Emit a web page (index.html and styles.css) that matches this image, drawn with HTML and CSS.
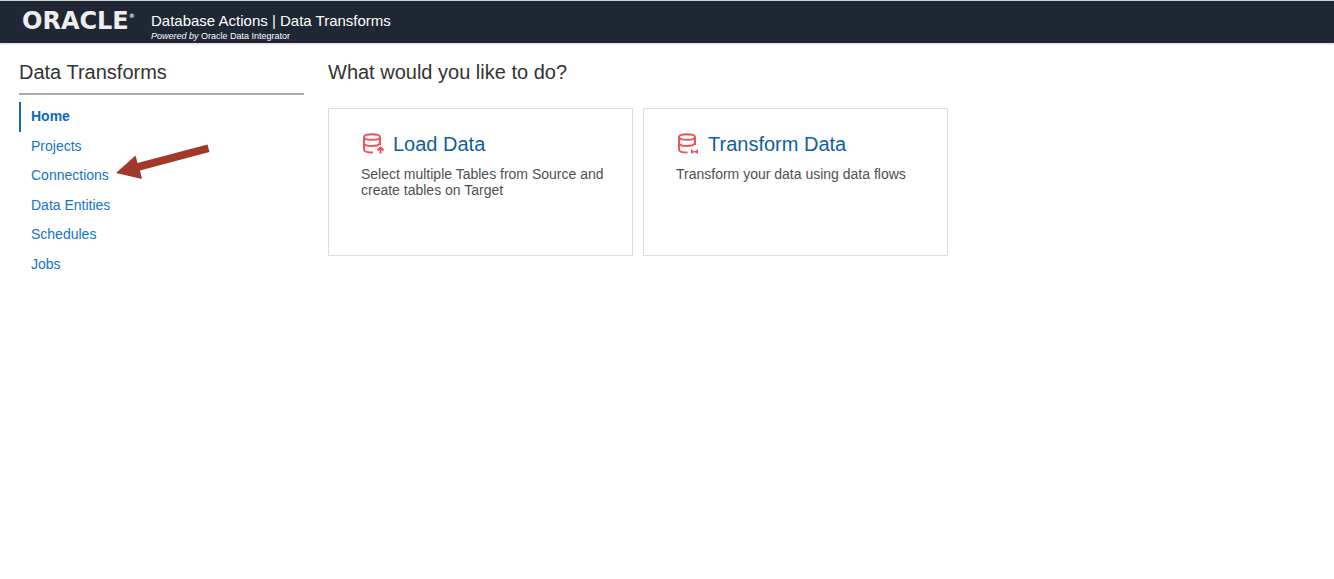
FILE: index.html
```html
<!DOCTYPE html>
<html lang="en">
<head>
<meta charset="utf-8">
<meta name="viewport" content="width=device-width, initial-scale=1">
<title>Data Transforms</title>
<link rel="stylesheet" href="styles.css">
</head>
<body>
<header class="topbar">
  <div class="logo">ORACLE<span class="logo-mark">®</span></div>
  <div class="product">
    <div class="product-name">Database Actions | Data Transforms</div>
    <div class="product-note"><em>Powered by</em> Oracle Data Integrator</div>
  </div>
</header>
<div class="layout">
  <aside class="sidebar">
    <h1 class="heading sidebar-title">Data Transforms</h1>
    <nav class="nav" aria-label="Data Transforms">
      <a class="nav-link active" href="#home" aria-current="page">Home</a>
      <a class="nav-link" href="#projects">Projects</a>
      <a class="nav-link" href="#connections">Connections
        <svg class="pointer" width="96" height="40" viewBox="0 0 96 40" aria-hidden="true"><path d="M1 31 20.500 13.500 22.500 21 92.500 2.500 94.500 10 25 28.500 27 37Z" fill="#a23829"/></svg></a>
      <a class="nav-link" href="#entities">Data Entities</a>
      <a class="nav-link" href="#schedules">Schedules</a>
      <a class="nav-link" href="#jobs">Jobs</a>
    </nav>
  </aside>
  <main class="content">
    <h2 class="heading">What would you like to do?</h2>
    <div class="cards">
      <a class="card" href="#load">
        <span class="card-title">
          <svg class="icon" viewBox="0 0 24 24" width="24" height="24" aria-hidden="true"><g fill="none" stroke="#f0535a" stroke-width="2"><path d="M3 5C3 1.200 19 1.200 19 5S3 8.800 3 5V17.500C3 19.500 6 20.500 12 20.500M19 5V13M3 11.500C4 14.800 17 14.800 19 11.500"/><path d="M19.500 21.500V16M16.500 18.500 19.500 15.500 22.500 18.500"/></g></svg>
          Load Data</span>
        <span class="card-text">Select multiple Tables from Source and create tables on Target</span>
      </a>
      <a class="card" href="#transform">
        <span class="card-title">
          <svg class="icon" viewBox="0 0 24 24" width="24" height="24" aria-hidden="true"><path d="M3 5C3 1.200 19 1.200 19 5S3 8.800 3 5V17.500C3 19.500 6 20.500 11.500 20.500M19 5V13M3 11.500C4 14.800 17 14.800 19 11.500" fill="none" stroke="#f0535a" stroke-width="2"/><path d="M15 17 17.500 19H19.500L22 17V22L19.500 20.500H17.500L15 22Z" fill="#f0535a"/></svg>
          Transform Data</span>
        <span class="card-text">Transform your data using data flows</span>
      </a>
    </div>
  </main>
</div>
</body>
</html>
```
FILE: styles.css
```css
* { box-sizing: border-box; }

body {
  margin: 0;
  background: #fff;
  color: #333;
  font: 14px/16px "Liberation Sans", Arial, sans-serif;
}

a { text-decoration: none; }

.topbar {
  display: flex;
  padding: 11px 22px 0;
  border-top: 1px solid #c9d3d2;
  background: #1e2733;
  color: #fff;
  box-shadow: 0 1px 2px #d8d0d8;
}

.logo {
  display: flex;
  flex: 0 0 129px;
  color: #eee;
  font: bold 24px/18px "DejaVu Sans", sans-serif;
}

.logo-mark { font-size: 6px; line-height: 8px; }

.product-name { font-size: 15px; line-height: 18px; }

.product-note {
  font-size: 9px;
  line-height: 13px;
}

.layout {
  display: flex;
  gap: 24px;
  padding: 17px 19px;
}

.sidebar { flex: 0 0 285px; }

.heading {
  margin: 0;
  color: #333;
  font-size: 20px;
  font-weight: normal;
  line-height: 24px;
}

.sidebar-title {
  padding-bottom: 9px;
  border-bottom: 2px solid #aaa;
}

.nav {
  display: grid;
  grid-auto-rows: 1fr;
  min-height: 177px;
  margin-top: 7px;
}

.nav-link {
  position: relative;
  padding: 6px 10px;
  border-left: 2px solid transparent;
  color: #1474cc;
}

.nav-link.active {
  border-color: #0f6cbd;
  color: #0b69c7;
  font-weight: bold;
}

.pointer {
  position: absolute;
  top: -19px;
  left: 94px;
}

.content { flex: 1; }

.cards {
  display: grid;
  grid-template-columns: repeat(2, minmax(0, 1fr));
  gap: 10px;
  max-width: 620px;
  margin-top: 24px;
}

.card {
  min-height: 148px;
  padding: 23px 20px 23px 32px;
  border: 1px solid #ddd;
}

.card-title {
  display: flex;
  align-items: center;
  gap: 8px;
  color: #0f5e9f;
  font-size: 20px;
  line-height: 24px;
}

.card-text {
  display: block;
  margin-top: 10px;
  color: #505050;
}
```
